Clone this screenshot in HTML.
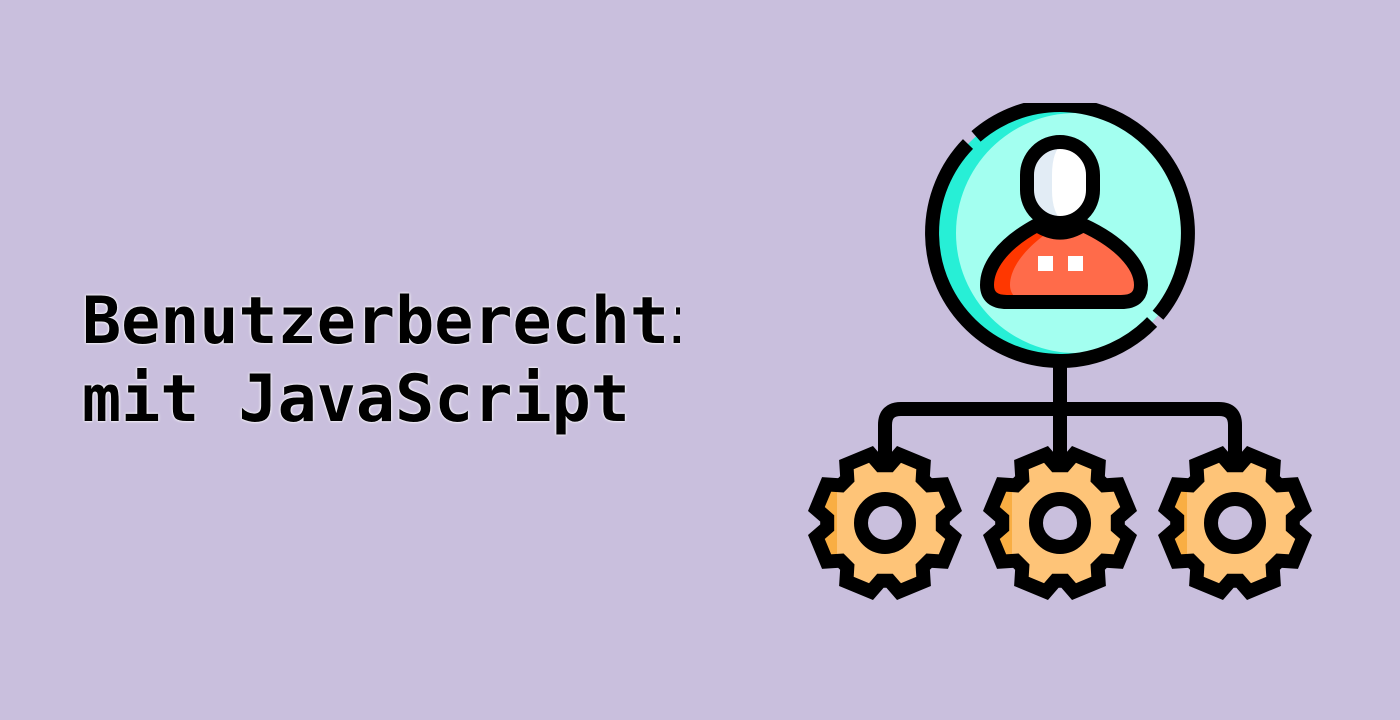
<!DOCTYPE html>
<html><head><meta charset="utf-8"><style>
html,body{margin:0;padding:0;width:1400px;height:720px;background:#c9bfdd;overflow:hidden}
.t{position:absolute;left:82px;top:283px;width:598px;overflow:hidden;white-space:nowrap;font-family:"DejaVu Sans Mono","Liberation Mono",monospace;font-weight:bold;font-size:65px;line-height:78px;color:#000;text-shadow:0 0 3px #fff,0 0 2px #fff}
svg{position:absolute;left:0;top:0}
</style></head><body>
<div class="t">Benutzerberechtigungen<br>mit JavaScript</div>
<svg width="1400" height="720" viewBox="0 0 1400 720">
<defs>
<path id="g" d="M57.8,4.6L68.6,14L58.4,38.6L44.1,37.7L37.7,44.1L38.6,58.4L14,68.6L4.6,57.8L-4.6,57.8L-14,68.6L-38.6,58.4L-37.7,44.1L-44.1,37.7L-58.4,38.6L-68.6,14L-57.8,4.6L-57.8,-4.6L-68.6,-14L-58.4,-38.6L-44.1,-37.7L-37.7,-44.1L-38.6,-58.4L-14,-68.6L-4.6,-57.8L4.6,-57.8L14,-68.6L38.6,-58.4L37.7,-44.1L44.1,-37.7L58.4,-38.6L68.6,-14L57.8,-4.6Z"/>
<clipPath id="gl"><rect x="-80" y="-80" width="32" height="160"/></clipPath>
<clipPath id="cc"><circle cx="1060" cy="233" r="128"/></clipPath>
<clipPath id="top"><rect x="0" y="103" width="1400" height="617"/></clipPath>
<g id="gear">
<use href="#g" fill="#fec478"/>
<use href="#g" fill="#f9ae43" clip-path="url(#gl)"/>
<use href="#g" fill="none" stroke="#000" stroke-width="14" stroke-linejoin="miter"/>
<circle r="24" fill="#c9bfdd" stroke="#000" stroke-width="14"/>
</g>
</defs>
<path d="M1060,362V460M885,462V425Q885,409 901,409H1219Q1235,409 1235,425V462" fill="none" stroke="#000" stroke-width="14"/>
<use href="#gear" x="885" y="523"/>
<use href="#gear" x="1060" y="523"/>
<use href="#gear" x="1235" y="523"/>
<g clip-path="url(#top)">
<circle cx="1060" cy="233" r="128" fill="#27efd6"/>
<circle cx="1076" cy="233" r="120" fill="#a3fff0" clip-path="url(#cc)"/>
<path d="M976,136.4A128,128 0 0 1 1158,315.3M1152.1,322A128,128 0 0 1 968,144" fill="none" stroke="#000" stroke-width="14"/>
</g>
<path d="M1037,225C1000,245 987,268 987,285Q987,302 1007,302L1121,302Q1141,302 1141,285C1141,265 1120,242 1083,225Q1060,240 1037,225Z" fill="#ff6b4a"/>
<path d="M1037,225C1000,245 987,268 987,285Q987,302 1007,302L1030,302Q1010,300 1010,285C1010,268 1025,248 1050,231Q1042,229 1037,225Z" fill="#ff3700"/>
<path d="M1037,225C1000,245 987,268 987,285Q987,302 1007,302L1121,302Q1141,302 1141,285C1141,265 1120,242 1083,225Q1060,240 1037,225Z" fill="none" stroke="#000" stroke-width="14" stroke-linejoin="round"/>
<rect x="1027" y="142" width="66" height="81" rx="33" fill="#fff"/>
<path d="M1060,142A33,33 0 0 0 1027,175V190A33,33 0 0 0 1064,223Q1052,214 1052,190V175Q1052,150 1064,142Z" fill="#e2ecf5"/>
<rect x="1027" y="142" width="66" height="81" rx="33" fill="none" stroke="#000" stroke-width="14"/>
<rect x="1038" y="256" width="15" height="15" fill="#fff"/>
<rect x="1068" y="256" width="15" height="15" fill="#fff"/>
</svg>
</body></html>
